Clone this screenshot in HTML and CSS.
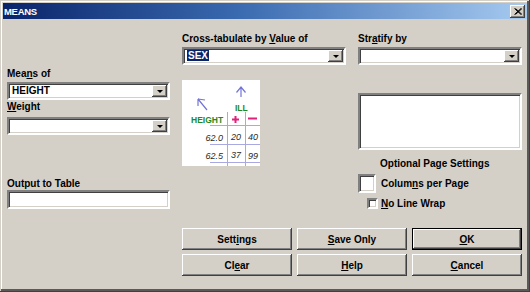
FILE: index.html
```html
<!DOCTYPE html>
<html>
	<head>
		<meta charset="UTF-8">
		<title>MEANS</title>
		<link rel="stylesheet" href="styles.css">
	</head>
	<body>
		<div class="window">
			<div class="titlebar">
				<span class="title">MEANS</span>
				<span class="close">
					<svg width="8" height="7" viewBox="0 0 8 7"><path d="M0.5 0.5 L7 6.5 M1.5 0.5 L8 6.5 M7 0.5 L0.5 6.5 M8 0.5 L1.5 6.5" stroke="#000" stroke-width="1"/></svg>
				</span>
			</div>
			<div class="body">
				<!-- left column -->
				<div class="col">
					<div class="lbl lbl-means">Mea<u>n</u>s of</div>
					<div class="combo"><span class="val">HEIGHT</span><span class="arrow"></span></div>
					<div class="lbl lbl-weight"><u>W</u>eight</div>
					<div class="combo combo-weight"><span class="val"></span><span class="arrow"></span></div>
					<div class="lbl lbl-output">Output to Table</div>
					<div class="field field-output"></div>
				</div>
				<!-- middle column -->
				<div class="col">
					<div class="lbl lbl-top">Cross-tabulate by <u>V</u>alue of</div>
					<div class="combo"><span class="val"><span class="sel">SEX</span></span><span class="arrow"></span></div>
					<div class="picture">
						<svg width="78" height="86" viewBox="0 0 78 86">
							<g stroke="#7474d8" stroke-width="1.2" fill="none">
								<path d="M25 30 L16 19 M16 19 L16 26 M16 19 L23 20"/>
								<path d="M59 17 V7 M54.5 12.5 L59 7 L63.5 12.5"/>
							</g>
							<g stroke="#a9a9e2" stroke-width="1">
								<path d="M28 45.5 H78 M28 64.5 H78 M28 82.5 H78"/>
								<path d="M45.5 32 V86 M63.5 32 V86"/>
							</g>
							<text x="53" y="31" class="pic-hdr">ILL</text>
							<text x="9" y="43" class="pic-hdr">HEIGHT</text>
							<g stroke="#e0207a" stroke-width="2">
								<path d="M50 39.5 H57 M53.5 36 V43"/>
								<path d="M66 38.5 H75"/>
							</g>
							<text x="41" y="61" class="pic-num" text-anchor="end">62.0</text>
							<text x="49" y="60" class="pic-num">20</text>
							<text x="66" y="60" class="pic-num">40</text>
							<text x="41" y="79" class="pic-num" text-anchor="end">62.5</text>
							<text x="49" y="78" class="pic-num">37</text>
							<text x="66" y="79" class="pic-num">99</text>
						</svg>
					</div>
				</div>
				<!-- right column -->
				<div class="col">
					<div class="lbl lbl-top">Str<u>a</u>tify by</div>
					<div class="combo"><span class="val"></span><span class="arrow"></span></div>
					<div class="field listbox"></div>
					<div class="lbl opt-title">Optional Page Settings</div>
					<div class="opt-row">
						<div class="field field-cols"></div>
						<span class="lbl">Colum<u>n</u>s per Page</span>
					</div>
					<div class="opt-row opt-wrap">
						<div class="field check"></div>
						<span class="lbl"><u>N</u>o Line Wrap</span>
					</div>
				</div>
				<!-- buttons -->
				<div class="buttons">
					<div class="btn">Sett<u>i</u>ngs</div>
					<div class="btn"><u>S</u>ave Only</div>
					<div class="btn btn-default"><u>O</u>K</div>
					<div class="btn">Cl<u>e</u>ar</div>
					<div class="btn"><u>H</u>elp</div>
					<div class="btn"><u>C</u>ancel</div>
				</div>
			</div>
		</div>
	</body>
</html>
```
FILE: styles.css
```css
*{
	margin: 0;
	padding: 0;
	box-sizing: border-box;
}
body{
	background: #d4d0c8;
	font-family: "Liberation Sans", Arial, sans-serif;
	font-size: 10px;
	font-weight: bold;
	color: #000;
}
u{
	text-decoration: underline;
	text-underline-offset: 1px;
}
.window{
	width: 530px;
	height: 292px;
	padding: 3px;
	background: #d4d0c8;
	box-shadow: inset -1px -1px #404040, inset 1px 1px #d4d0c8, inset -3px -3px #5a5a5a, inset 2px 2px #fff;
}
.titlebar{
	height: 16px;
	display: flex;
	align-items: center;
	justify-content: space-between;
	padding: 0 2px 0 1px;
	background: linear-gradient(to right, #0a246a, #3a6ab0 45%, #a6caf0);
}
.title{
	color: #fff;
	font-size: 9.5px;
	letter-spacing: -0.3px;
}
.close{
	width: 15px;
	height: 13px;
	display: flex;
	align-items: center;
	justify-content: center;
	background: #d4d0c8;
	box-shadow: inset -1px -1px #404040, inset 1px 1px #fff, inset -2px -2px #808080;
}
.body{
	display: grid;
	grid-template-columns: 163px 164px 164px;
	column-gap: 12px;
	padding-left: 4px;
}
.col{
	display: flex;
	flex-direction: column;
}
.lbl{
	line-height: 13px;
	white-space: nowrap;
}
.lbl-means{
	margin-top: 48px;
}
.lbl-weight{
	margin-top: 0;
}
.lbl-output{
	margin-top: 42px;
}
.lbl-top{
	margin-top: 13px;
}
.field{
	background: #fff;
	border: 2px solid;
	border-color: #808080 #fff #fff #808080;
	box-shadow: inset 1px 1px #404040, inset -1px -1px #d4d0c8;
}
.combo{
	height: 18px;
	margin-top: 2px;
	display: flex;
	background: #fff;
	border: 2px solid;
	border-color: #808080 #fff #fff #808080;
	box-shadow: inset 1px 1px #404040, inset -1px -1px #d4d0c8;
	padding: 1px 1px 1px 1px;
}
.combo-weight{
	margin-top: 4px;
}
.combo .val{
	flex: 1;
	padding-left: 2px;
	line-height: 12px;
}
.sel{
	background: #0a246a;
	color: #fff;
	padding: 0 1px;
}
.arrow{
	width: 15px;
	display: flex;
	align-items: center;
	justify-content: center;
	background: #d4d0c8;
	box-shadow: inset -1px -1px #404040, inset 1px 1px #fff, inset -2px -2px #808080;
}
.arrow::after{
	content: "";
	border-left: 3px solid transparent;
	border-right: 3px solid transparent;
	border-top: 3px solid #000;
	margin-top: 1px;
}
.field-output{
	height: 19px;
}
.picture{
	width: 78px;
	height: 86px;
	margin-top: 15px;
	background: #fff;
}
.picture svg{
	display: block;
}
.pic-hdr{
	font-family: "Liberation Sans", Arial, sans-serif;
	font-size: 8.5px;
	font-weight: bold;
	fill: #1e8a22;
}
.pic-num{
	font-family: "Liberation Sans", Arial, sans-serif;
	font-size: 9px;
	font-weight: normal;
	font-style: italic;
	fill: #2a2a2a;
}
.listbox{
	height: 57px;
	margin-top: 28px;
}
.opt-title{
	margin-top: 7px;
	margin-left: 22px;
}
.opt-row{
	display: flex;
	align-items: center;
	gap: 5px;
	margin-top: 4px;
}
.field-cols{
	width: 18px;
	height: 19px;
}
.opt-wrap{
	margin-top: 4px;
	padding-left: 9px;
	gap: 3px;
}
.check{
	width: 11px;
	height: 11px;
}
.buttons{
	grid-column: 2 / 4;
	display: grid;
	grid-template-columns: repeat(3, 110px);
	column-gap: 5px;
	row-gap: 4px;
	margin-top: 18px;
}
.btn{
	height: 22px;
	display: flex;
	align-items: center;
	justify-content: center;
	background: #d4d0c8;
	box-shadow: inset -1px -1px #404040, inset 1px 1px #fff, inset -2px -2px #808080;
}
.btn-default{
	border: 1px solid #000;
}
```
